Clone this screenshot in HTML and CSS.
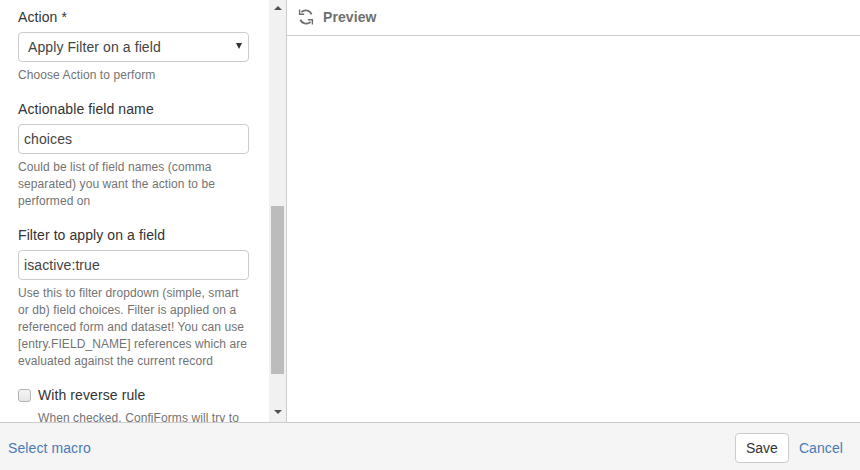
FILE: index.html
```html
<!DOCTYPE html>
<html lang="en">
<head>
<meta charset="utf-8">
<title>Select macro</title>
<link rel="stylesheet" href="styles.css">
</head>
<body>
<div class="dialog">
  <div class="body">
    <form class="form">
      <div class="group">
        <label class="label">Action *</label>
        <div class="select"><span>Apply Filter on a field</span><span class="caret"></span></div>
        <p class="help">Choose Action to perform</p>
      </div>
      <div class="group group-tight">
        <label class="label">Actionable field name</label>
        <div class="input">choices</div>
        <p class="help">Could be list of field names (comma<br>separated) you want the action to be<br>performed on</p>
      </div>
      <div class="group group-wide">
        <label class="label">Filter to apply on a field</label>
        <div class="input">isactive:true</div>
        <p class="help">Use this to filter dropdown (simple, smart<br>or db) field choices. Filter is applied on a<br>referenced form and dataset! You can use<br>[entry.FIELD_NAME] references which are<br>evaluated against the current record</p>
      </div>
      <div class="check-row"><span class="checkbox"></span><span class="check-label">With reverse rule</span></div>
      <p class="help check-help">When checked, ConfiForms will try to</p>
    </form>
    <div class="scrollbar">
      <span class="arrow arrow-up"></span>
      <span class="thumb"></span>
      <span class="arrow arrow-down"></span>
    </div>
    <section class="preview">
      <header class="preview-head">
        <svg class="refresh" width="16" height="16" viewBox="0 0 16 16" fill="none" stroke="#6e6e6e" stroke-width="1.7">
          <path d="M13.6 5.4A6.2 6.2 0 0 0 3.4 3.2"/>
          <path d="M2.4 10.6A6.2 6.2 0 0 0 12.6 12.8"/>
          <path d="M1.6.6v4.6h4.6" stroke-width="1.4"/>
          <path d="M14.4 15.4v-4.6H9.8" stroke-width="1.4"/>
        </svg>
        <span class="preview-title">Preview</span>
      </header>
    </section>
  </div>
  <footer class="footer">
    <a class="link">Select macro</a>
    <div class="actions">
      <button class="save" type="button">Save</button>
      <a class="link">Cancel</a>
    </div>
  </footer>
</div>
</body>
</html>
```
FILE: styles.css
```css
html, body {
  margin: 0;
  height: 100%;
}
body {
  font-family: "Liberation Sans", Arial, sans-serif;
  font-size: 14px;
  line-height: 20px;
  letter-spacing: 0.09px;
  color: #333;
  background: #fff;
}
.dialog {
  width: 860px;
  height: 470px;
  display: flex;
  flex-direction: column;
  overflow: hidden;
}
.body {
  height: 422px;
  display: flex;
}
.form {
  width: 269px;
  box-sizing: border-box;
  padding: 7px 20px 0 18px;
  overflow: hidden;
  flex: none;
}
.group {
  margin-bottom: 15px;
}
.group-tight {
  margin-bottom: 14px;
}
.group-wide {
  margin-bottom: 16px;
}
.label {
  display: block;
  margin-bottom: 5px;
}
.select, .input {
  box-sizing: border-box;
  height: 30px;
  width: 231px;
  border: 1px solid #ccc;
  border-radius: 4px;
  background: #fff;
  color: #444;
  line-height: 28px;
  display: flex;
  align-items: center;
  justify-content: space-between;
}
.select {
  padding: 0 6px 0 9px;
}
.input {
  padding: 0 5px;
}
.caret {
  width: 0;
  height: 0;
  border-left: 3.5px solid transparent;
  border-right: 3.5px solid transparent;
  border-top: 6px solid #333;
  margin-bottom: 3px;
}
.help {
  margin: 5px 0 0;
  font-size: 12px;
  line-height: 17.14px;
  letter-spacing: 0.08px;
  color: #737373;
}
.check-row {
  display: flex;
  align-items: center;
  gap: 7px;
  margin-top: -1px;
}
.checkbox {
  box-sizing: border-box;
  width: 13px;
  height: 13px;
  border: 1px solid #b4b4b4;
  border-radius: 3px;
  background: linear-gradient(#f4f4f4, #e6e6e6);
}
.check-label {
  color: #333;
}
.check-help {
  margin-left: 20px;
  white-space: nowrap;
}
.scrollbar {
  width: 17px;
  flex: none;
  background: #f1f1f1;
  display: flex;
  flex-direction: column;
  align-items: center;
  border-right: 1px solid #ccc;
}
.arrow {
  width: 0;
  height: 0;
  border-left: 4px solid transparent;
  border-right: 4px solid transparent;
}
.arrow-up {
  border-bottom: 4px solid #505050;
  margin-top: 6px;
}
.arrow-down {
  border-top: 4px solid #505050;
  margin-top: 36px;
}
.thumb {
  width: 13px;
  height: 168px;
  background: #bcbcbc;
  margin-top: 196px;
}
.preview {
  flex: 1;
}
.preview-head {
  height: 36px;
  box-sizing: border-box;
  border-bottom: 1px solid #ccc;
  display: flex;
  align-items: center;
  padding: 0 0 1px 11px;
  gap: 9px;
}
.refresh {
  flex: none;
}
.preview-title {
  font-weight: bold;
  color: #707070;
}
.footer {
  height: 48px;
  box-sizing: border-box;
  border-top: 1px solid #ccc;
  background: #f5f5f5;
  display: flex;
  align-items: center;
  justify-content: space-between;
  padding: 2px 17px 0 8px;
}
.actions {
  display: flex;
  align-items: center;
  gap: 10px;
}
.link {
  color: #4a7ab5;
  text-decoration: none;
}
.save {
  font: inherit;
  color: #333;
  width: 54px;
  height: 30px;
  padding: 0;
  background: #fff;
  border: 1px solid #ccc;
  border-radius: 4px;
}
```
